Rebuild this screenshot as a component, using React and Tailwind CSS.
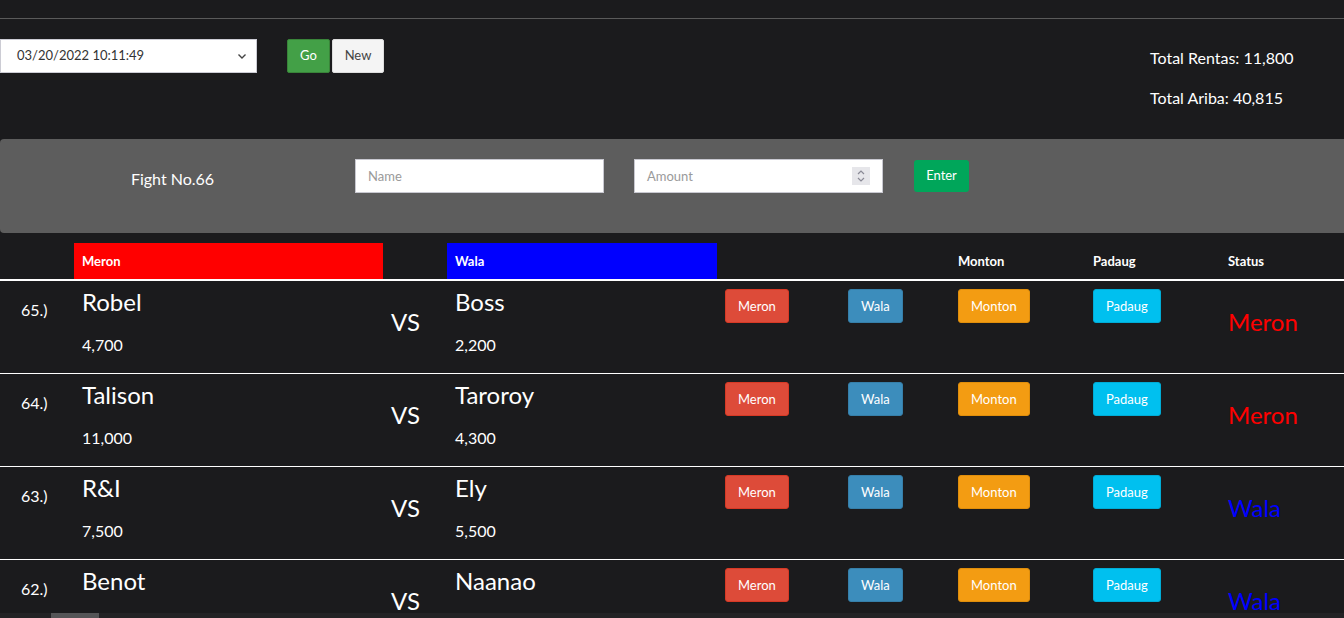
import React from "react";

const rows = [
  { no: "65.)", meron: "Robel", meronAmt: "4,700", wala: "Boss", walaAmt: "2,200", status: "Meron" },
  { no: "64.)", meron: "Talison", meronAmt: "11,000", wala: "Taroroy", walaAmt: "4,300", status: "Meron" },
  { no: "63.)", meron: "R&I", meronAmt: "7,500", wala: "Ely", walaAmt: "5,500", status: "Wala" },
  { no: "62.)", meron: "Benot", meronAmt: "", wala: "Naanao", walaAmt: "", status: "Wala" },
];

const grid = "grid grid-cols-[74px_309px_64px_270px_123px_110px_135px_135px_180px]";

function Btn({ cls, children }) {
  return (
    <button className={`h-[34px] rounded-[3px] border px-[12px] text-[13px] leading-[32px] text-white ${cls}`}>
      {children}
    </button>
  );
}

function Row({ r }) {
  return (
    <div className={`${grid} h-[93px] border-b border-white`}>
      <div className="pl-[21px] pt-[17px] text-[16px] leading-[24px]">{r.no}</div>
      <div className="px-[8px] pt-[8px]">
        <div className="text-[24px] leading-[26px]">{r.meron}</div>
        <div className="mt-[18px] text-[16px] leading-[24px]">{r.meronAmt}</div>
      </div>
      <div className="px-[8px] pt-[28px] text-[24px] leading-[26px]">VS</div>
      <div className="px-[8px] pt-[8px]">
        <div className="text-[24px] leading-[26px]">{r.wala}</div>
        <div className="mt-[18px] text-[16px] leading-[24px]">{r.walaAmt}</div>
      </div>
      <div className="px-[8px] pt-[8px]">
        <Btn cls="bg-[#dd4b39] border-[#d73925]">Meron</Btn>
      </div>
      <div className="px-[8px] pt-[8px]">
        <Btn cls="bg-[#3c8dbc] border-[#367fa9]">Wala</Btn>
      </div>
      <div className="px-[8px] pt-[8px]">
        <Btn cls="bg-[#f39c12] border-[#e08e0b]">Monton</Btn>
      </div>
      <div className="px-[8px] pt-[8px]">
        <Btn cls="bg-[#00c0ef] border-[#00acd6]">Padaug</Btn>
      </div>
      <div
        className={`px-[8px] pt-[28px] text-[24px] leading-[26px] ${
          r.status === "Meron" ? "text-[#ff0000]" : "text-[#0000ff]"
        }`}
      >
        {r.status}
      </div>
    </div>
  );
}

export default function App() {
  return (
    <div className="flex h-[618px] flex-col overflow-hidden bg-[#1b1b1d] text-white font-['Lato',sans-serif]">
      <div className="flex-1 overflow-hidden">
        <div className="w-[1420px]">
          <div className="h-[18px]" />
          <div className="border-t border-[#5a5a5a]" />
          <div className="flex h-[120px]">
            <div className="flex w-[1150px] items-start pt-[20px]">
              <div className="flex h-[34px] w-[257px] items-center justify-between border border-[#ccccd4] bg-white pl-[16px] pr-[8px] text-[13px] text-[#333]">
                <span>03/20/2022 10:11:49</span>
                <svg width="12" height="12" viewBox="0 0 12 12" fill="none" stroke="#444" strokeWidth="1.4">
                  <path d="M2.5 4.5 L6 8 L9.5 4.5" />
                </svg>
              </div>
              <button className="ml-[30px] h-[34px] w-[43px] rounded-[2px] border border-[#398439] bg-[#43a047] text-[13px] text-white">
                Go
              </button>
              <button className="ml-[2px] h-[34px] w-[52px] rounded-[2px] border border-[#dddddd] bg-[#f4f4f4] text-[13px] text-[#444]">
                New
              </button>
            </div>
            <div className="pt-[27px] text-[16px] leading-[24px] text-white">
              <div>Total Rentas: 11,800</div>
              <div className="mt-[16px]">Total Ariba: 40,815</div>
            </div>
          </div>
          <div className="flex h-[94px] items-start rounded-[4px] bg-[#5d5d5d] pt-[20px]">
            <div className="w-[345px] pt-[6px] text-center text-[16px] leading-[28px]">Fight No.66</div>
            <div className="ml-[10px] flex h-[34px] w-[249px] items-center border border-[#c8c8d0] bg-white px-[12px] pt-[1px] text-[13px] text-[#9a9a9a]">
              Name
            </div>
            <div className="ml-[30px] flex h-[34px] w-[249px] items-center justify-between border border-[#c8c8d0] bg-white pl-[12px] pr-[12px] text-[13px] text-[#9a9a9a]">
              <span className="pt-[1px]">Amount</span>
              <span className="flex h-[18px] w-[18px] items-center justify-center bg-[#e6e6ea]">
                <svg width="10" height="14" viewBox="0 0 10 14" fill="none" stroke="#8a8a96" strokeWidth="1.2">
                  <path d="M2 5 L5 2 L8 5" />
                  <path d="M2 9 L5 12 L8 9" />
                </svg>
              </span>
            </div>
            <button className="ml-[31px] mt-[1px] h-[32px] w-[55px] rounded-[3px] bg-[#00a65a] text-[13px] text-white">
              Enter
            </button>
          </div>
          <div className={`${grid} mt-[10px] h-[38px] border-b-2 border-white text-[13px] font-bold leading-[36px]`}>
            <div />
            <div className="bg-[#ff0000] px-[8px]">Meron</div>
            <div />
            <div className="bg-[#0000ff] px-[8px]">Wala</div>
            <div />
            <div />
            <div className="px-[8px]">Monton</div>
            <div className="px-[8px]">Padaug</div>
            <div className="px-[8px]">Status</div>
          </div>
          {rows.map((r) => (
            <Row key={r.no} r={r} />
          ))}
        </div>
      </div>
      <div className="flex h-[5px] bg-[#232325]">
        <div className="ml-[51px] w-[48px] bg-[#555557]" />
      </div>
    </div>
  );
}
